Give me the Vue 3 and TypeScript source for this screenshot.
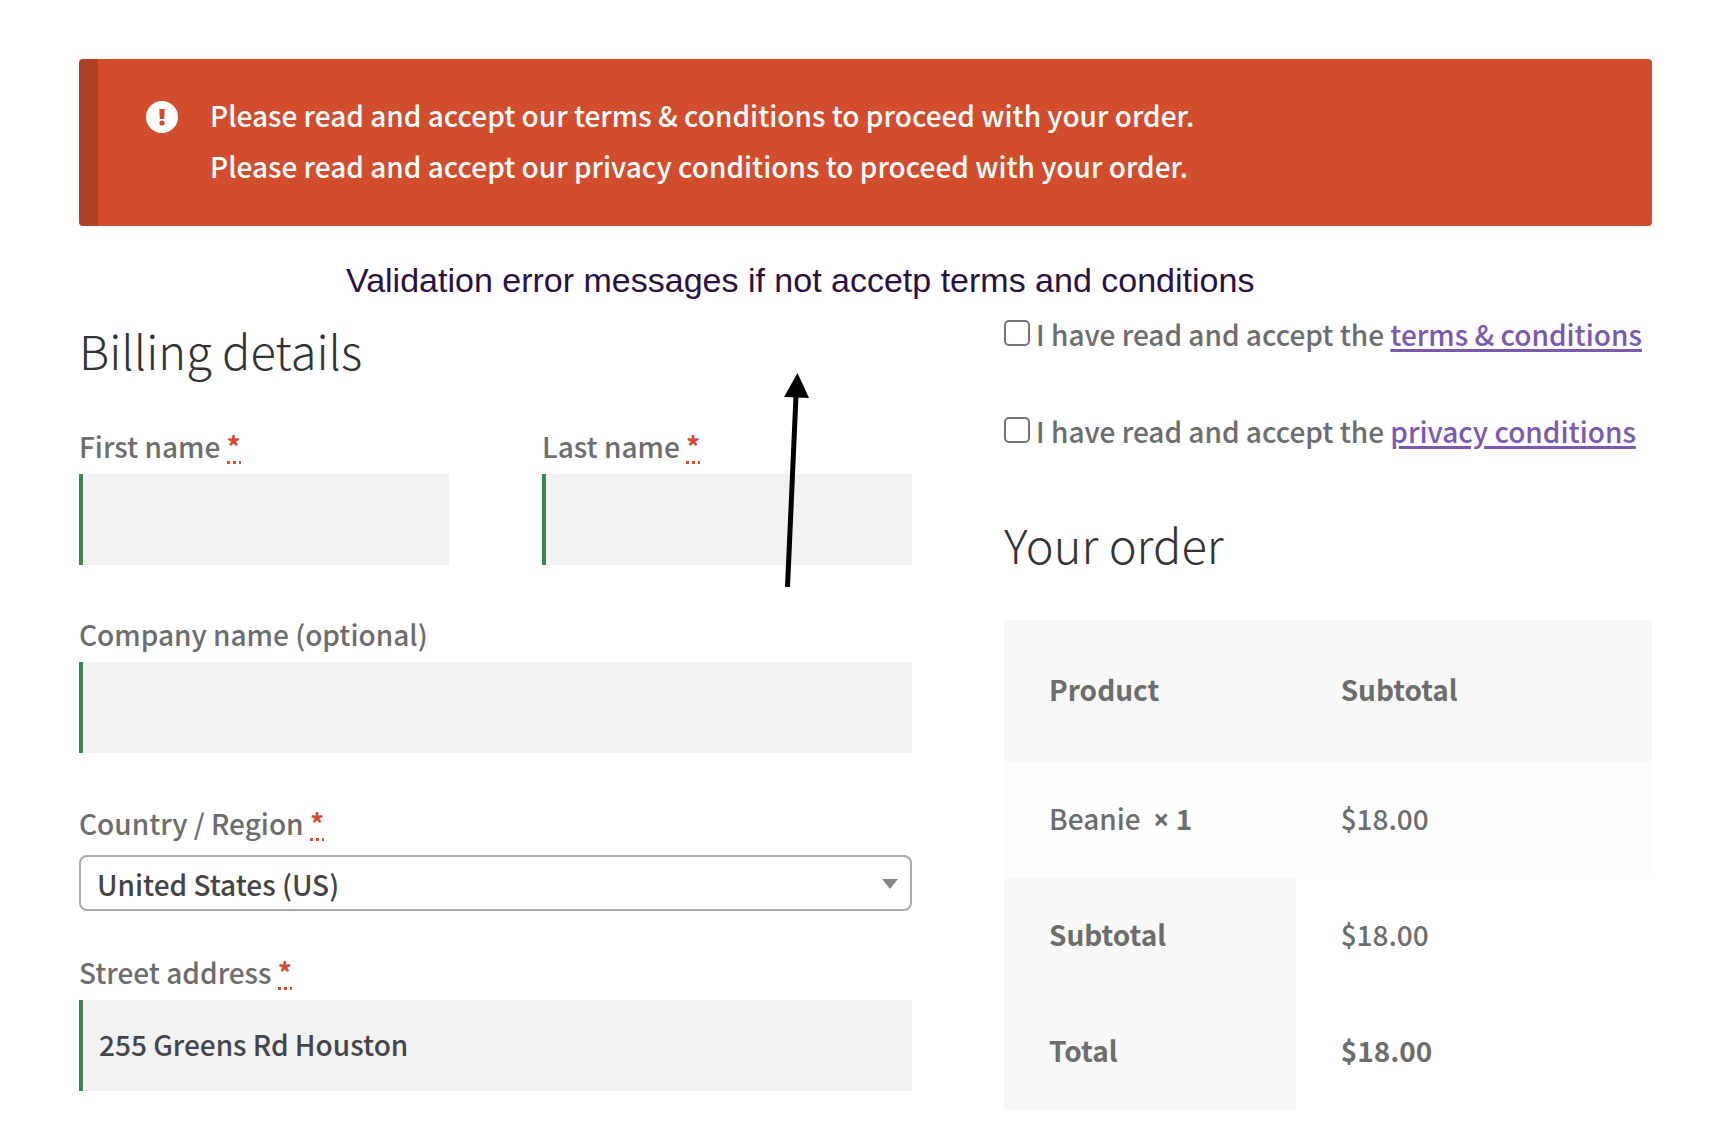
<script setup lang="ts">
import { ref } from 'vue'

interface Consent {
  id: string
  link: string
  accepted: boolean
}

const errors: string[] = [
  'Please read and accept our terms & conditions to proceed with your order.',
  'Please read and accept our privacy conditions to proceed with your order.',
]

const firstName = ref('')
const lastName = ref('')
const company = ref('')
const country = ref('US')
const street = ref('255 Greens Rd Houston')

const consents = ref<Consent[]>([
  { id: 'terms', link: 'terms & conditions', accepted: false },
  { id: 'privacy', link: 'privacy conditions', accepted: false },
])
</script>

<template>
  <main class="page">
    <div class="notice" role="alert">
      <svg class="notice-icon" viewBox="0 0 32 32" aria-hidden="true">
        <circle cx="16" cy="16" r="16" fill="#fff" />
        <path d="M13.3 8h5.4l-.5 10h-4.4z" fill="#d24d2e" />
        <circle cx="16" cy="22" r="2.6" fill="#d24d2e" />
      </svg>
      <ul class="notice-list">
        <li v-for="message in errors" :key="message">{{ message }}</li>
      </ul>
    </div>

    <p class="caption">Validation error messages if not accetp terms and conditions</p>

    <form class="columns" @submit.prevent>
      <section class="billing">
        <h3 class="heading">Billing details</h3>
        <div class="name-row">
          <div class="field">
            <label for="first-name">First name <abbr class="required" title="required">*</abbr></label>
            <input id="first-name" v-model="firstName" class="text-input" type="text" />
          </div>
          <div class="field">
            <label for="last-name">Last name <abbr class="required" title="required">*</abbr></label>
            <input id="last-name" v-model="lastName" class="text-input" type="text" />
          </div>
        </div>
        <div class="field">
          <label for="company">Company name (optional)</label>
          <input id="company" v-model="company" class="text-input" type="text" />
        </div>
        <div class="field field-select">
          <label for="country">Country / Region <abbr class="required" title="required">*</abbr></label>
          <div class="select-box">
            <select id="country" v-model="country">
              <option value="US">United States (US)</option>
            </select>
            <svg class="caret" viewBox="0 0 16 10" aria-hidden="true">
              <path d="M0 0h16L8 10z" fill="#888" />
            </svg>
          </div>
        </div>
        <div class="field">
          <label for="street">Street address <abbr class="required" title="required">*</abbr></label>
          <input id="street" v-model="street" class="text-input" type="text" />
        </div>

        <svg class="arrow" viewBox="0 0 30 216" aria-hidden="true">
          <path d="M5.5 215L14 24" stroke="#000" stroke-width="5" fill="none" />
          <path d="M15.5 1L27 26L2 25z" fill="#000" />
        </svg>
      </section>

      <section class="order">
        <div class="consents">
          <div v-for="item in consents" :key="item.id" class="consent">
            <input :id="item.id" v-model="item.accepted" type="checkbox" />
            <label :for="item.id">I have read and accept the <a :href="'#' + item.id">{{ item.link }}</a></label>
          </div>
        </div>
        <h3 class="heading order-heading">Your order</h3>
        <table class="order-table">
          <thead>
            <tr>
              <th scope="col">Product</th>
              <th scope="col">Subtotal</th>
            </tr>
          </thead>
          <tbody>
            <tr>
              <td>Beanie&nbsp; <strong><span class="times">×</span>&nbsp;1</strong></td>
              <td>$18.00</td>
            </tr>
          </tbody>
          <tfoot>
            <tr>
              <th scope="row">Subtotal</th>
              <td>$18.00</td>
            </tr>
            <tr>
              <th scope="row">Total</th>
              <td><strong>$18.00</strong></td>
            </tr>
          </tfoot>
        </table>
      </section>
    </form>
  </main>
</template>

<style>
body {
  margin: 0;
  background: #fff;
}
</style>

<style scoped>
* {
  box-sizing: border-box;
}

.page {
  padding: 59px 82px 39px 79px;
  font-family: 'Source Sans Pro', 'Noto Sans CJK SC', sans-serif;
  font-size: 28px;
  font-weight: 500;
  line-height: 46px;
  color: #6d6d6d;
}

.notice {
  display: flex;
  gap: 32px;
  padding: 31px 48px 34px;
  border-left: 19px solid #b14029;
  border-radius: 4px;
  background: #d24d2e;
  color: #fff;
  line-height: 51px;
}

.notice-icon {
  flex: none;
  width: 32px;
  height: 32px;
  margin-top: 11px;
}

.notice-list {
  margin: 0;
  padding: 0;
  list-style: none;
}

.caption {
  margin: 34px 0 0;
  padding-left: 267px;
  font-family: 'Liberation Sans', Arial, sans-serif;
  font-size: 34px;
  font-weight: 400;
  line-height: 40px;
  color: #2b1140;
}

.columns {
  display: grid;
  grid-template-columns: 9fr 7fr;
  column-gap: 92px;
  align-items: start;
}

.billing {
  position: relative;
  padding-top: 16px;
}

.heading {
  margin: 0 0 39px;
  font-size: 47px;
  font-weight: 300;
  line-height: 68px;
  color: #333;
}

.name-row {
  display: grid;
  grid-template-columns: 1fr 1fr;
  column-gap: 93px;
}

.field {
  margin-bottom: 47px;
}

.field:last-of-type {
  margin-bottom: 0;
}

.name-row .field {
  margin-bottom: 46px;
}

.field > label {
  display: block;
  margin-bottom: 5px;
}

.required {
  background: repeating-linear-gradient(90deg, #d24d2e 0 3px, transparent 3px 6px) left bottom 2px / 100% 3px no-repeat;
  color: #d24d2e;
  font-weight: 700;
  text-decoration: none;
}

.text-input {
  display: block;
  width: 100%;
  height: 91px;
  padding: 0 16px 4px;
  border: 0;
  border-left: 4px solid #3c8453;
  border-radius: 0;
  background: #f2f2f2;
  color: #43454b;
  font: inherit;
  outline: none;
}

.field.field-select {
  margin-bottom: 38px;
}

.field-select > label {
  margin-bottom: 9px;
}

.select-box {
  position: relative;
}

.select-box select {
  display: block;
  width: 100%;
  height: 56px;
  padding: 2px 48px 0 16px;
  border: 2px solid #aaa;
  border-radius: 8px;
  background: #fff;
  color: #444;
  font: inherit;
  appearance: none;
}

.caret {
  position: absolute;
  top: 24px;
  right: 14px;
  width: 16px;
  height: 10px;
  pointer-events: none;
}

.arrow {
  position: absolute;
  top: 72px;
  right: 100px;
  width: 30px;
  height: 216px;
  pointer-events: none;
}

.order {
  padding-top: 11px;
}

.consents {
  display: grid;
  row-gap: 51px;
  margin-bottom: 56px;
}

.consent {
  display: flex;
  gap: 6px;
  white-space: nowrap;
}

.consent input {
  flex: none;
  width: 26px;
  height: 26px;
  margin: 9px 0 0;
  border: 2px solid #767676;
  border-radius: 5px;
  background: #fff;
  appearance: none;
}

.consent input:checked {
  background: #7c58b0;
}

.consent a {
  color: #7c58b0;
  text-decoration: underline;
  text-decoration-thickness: 3px;
  text-underline-offset: 3px;
}

.order-heading {
  margin-bottom: 42px;
}

.order-table {
  width: 100%;
  border-collapse: collapse;
  table-layout: fixed;
}

.order-table th,
.order-table td {
  padding: 33px 45px 37px;
  text-align: left;
}

.order-table th {
  background: #f8f8f8;
}

.order-table thead th {
  padding-top: 46px;
  padding-bottom: 50px;
}

.order-table thead th:first-child {
  width: 45%;
}

.order-table tbody td {
  background: #fdfdfd;
}

.times {
  font-family: 'Noto Sans', sans-serif;
  line-height: 1;
}
</style>
